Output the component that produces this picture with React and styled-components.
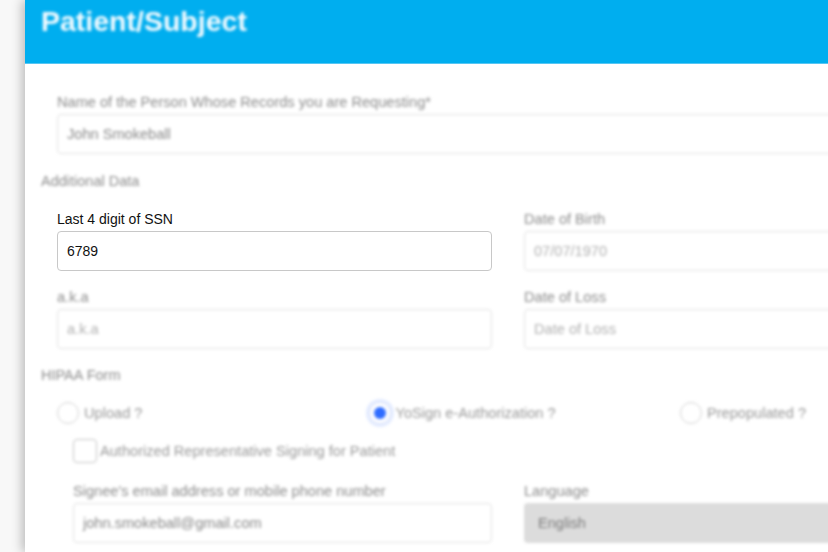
import React from 'react';
import styled, { createGlobalStyle, css } from 'styled-components';

const GlobalStyle = createGlobalStyle`
  html, body {
    margin: 0;
    padding: 0;
    background: #f8f8f8;
    overflow: hidden;
    font-family: "Liberation Sans", Arial, sans-serif;
  }
  * { box-sizing: border-box; }
`;

const blurred = css`
  filter: blur(1.5px);
`;

const Page = styled.div`
  padding-left: 25px;
  width: 1100px;
`;

const Card = styled.div`
  width: 1000px;
  min-height: 552px;
  background: #fff;
  box-shadow: -3px 0 10px rgba(0, 0, 0, 0.25);
`;

const Header = styled.div`
  height: 64px;
  background: #00aeef;
  border-bottom: 1px solid #56c6f3;
  padding: 6px 16px 0;
`;

const Title = styled.h1`
  margin: 0;
  font-size: 28.5px;
  line-height: 30px;
  font-weight: 700;
  color: #f4fbff;
  ${blurred}
`;

const Body = styled.div`
  padding: 30px 16px 0;
`;

const SectionTitle = styled.div`
  font-size: 14.5px;
  line-height: 16px;
  color: #8c8c8c;
  margin-bottom: ${p => p.$gap}px;
  ${blurred}
`;

const Indent = styled.div`
  padding-left: 16px;
  margin-bottom: ${p => p.$gap || 0}px;
`;

const Grid = styled.div`
  display: grid;
  grid-template-columns: 435px 435px;
  column-gap: 32px;
  row-gap: 18px;
  padding-left: 16px;
  margin-bottom: ${p => p.$gap || 0}px;
`;

const Field = styled.div`
  display: flex;
  flex-direction: column;
  gap: 3px;
  width: ${p => (p.$full ? '903px' : 'auto')};
  margin-left: ${p => (p.$indent ? '16px' : '0')};
  ${p => !p.$sharp && blurred}
`;

const Label = styled.label`
  font-size: ${p => (p.$sharp ? '14px' : '14.6px')};
  line-height: 17px;
  color: ${p => (p.$sharp ? '#111' : '#8c8c8c')};
`;

const Input = styled.div`
  height: 40px;
  display: flex;
  align-items: center;
  padding: 0 9px;
  font-size: ${p => (p.$sharp ? '14px' : '14.6px')};
  border-radius: 4px;
  border: 1px solid ${p => (p.$sharp ? '#c8c8c8' : '#e0e0e0')};
  background: #fff;
  color: ${p => (p.$sharp ? '#111' : p.$muted ? '#b0b0b0' : '#888')};
`;

const Select = styled.div`
  height: 40px;
  display: flex;
  align-items: center;
  padding: 0 14px;
  font-size: 14.6px;
  border-radius: 4px;
  background: #dcdcdc;
  color: #7c7c7c;
`;

const RadioRow = styled.div`
  display: grid;
  grid-template-columns: repeat(3, 311.5px);
  padding-left: 16px;
  margin-bottom: 15px;
  ${blurred}
`;

const Option = styled.label`
  display: flex;
  align-items: center;
  gap: 5px;
  font-size: 14.6px;
  color: #999;
`;

const Radio = styled.span`
  width: 22px;
  height: 22px;
  border-radius: 50%;
  display: flex;
  align-items: center;
  justify-content: center;
  border: 1.5px solid ${p => (p.$checked ? '#d5def8' : '#d2d2d2')};
  box-shadow: ${p => (p.$checked ? '0 0 0 3px rgba(60, 110, 255, 0.14)' : 'none')};
  &::after {
    content: '';
    width: 12px;
    height: 12px;
    border-radius: 50%;
    background: ${p => (p.$checked ? '#2f6cff' : 'transparent')};
  }
`;

const CheckRow = styled.label`
  display: flex;
  align-items: center;
  gap: 3px;
  padding-left: 32px;
  margin-bottom: 20px;
  font-size: 14.6px;
  color: #999;
  ${blurred}
`;

const Box = styled.span`
  width: 24px;
  height: 24px;
  border-radius: 4px;
  border: 1.5px solid #c4c4c4;
  background: #fff;
`;

export default function App() {
  return (
    <>
      <GlobalStyle />
      <Page>
        <Card>
          <Header>
            <Title>Patient/Subject</Title>
          </Header>
          <Body>
            <Indent $gap={19}>
              <Field $full>
                <Label>Name of the Person Whose Records you are Requesting*</Label>
                <Input>John Smokeball</Input>
              </Field>
            </Indent>

            <SectionTitle $gap={22}>Additional Data</SectionTitle>
            <Grid $gap={18}>
              <Field $sharp>
                <Label $sharp>Last 4 digit of SSN</Label>
                <Input $sharp>6789</Input>
              </Field>
              <Field>
                <Label>Date of Birth</Label>
                <Input $muted>07/07/1970</Input>
              </Field>
              <Field>
                <Label>a.k.a</Label>
                <Input $muted>a.k.a</Input>
              </Field>
              <Field>
                <Label>Date of Loss</Label>
                <Input $muted>Date of Loss</Input>
              </Field>
            </Grid>

            <SectionTitle $gap={19}>HIPAA Form</SectionTitle>
            <RadioRow>
              <Option><Radio />Upload ?</Option>
              <Option><Radio $checked />YoSign e-Authorization ?</Option>
              <Option><Radio />Prepopulated ?</Option>
            </RadioRow>
            <CheckRow>
              <Box />
              Authorized Representative Signing for Patient
            </CheckRow>
            <Grid>
              <Field $indent>
                <Label>Signee's email address or mobile phone number</Label>
                <Input>john.smokeball@gmail.com</Input>
              </Field>
              <Field>
                <Label>Language</Label>
                <Select>English</Select>
              </Field>
            </Grid>
          </Body>
        </Card>
      </Page>
    </>
  );
}
